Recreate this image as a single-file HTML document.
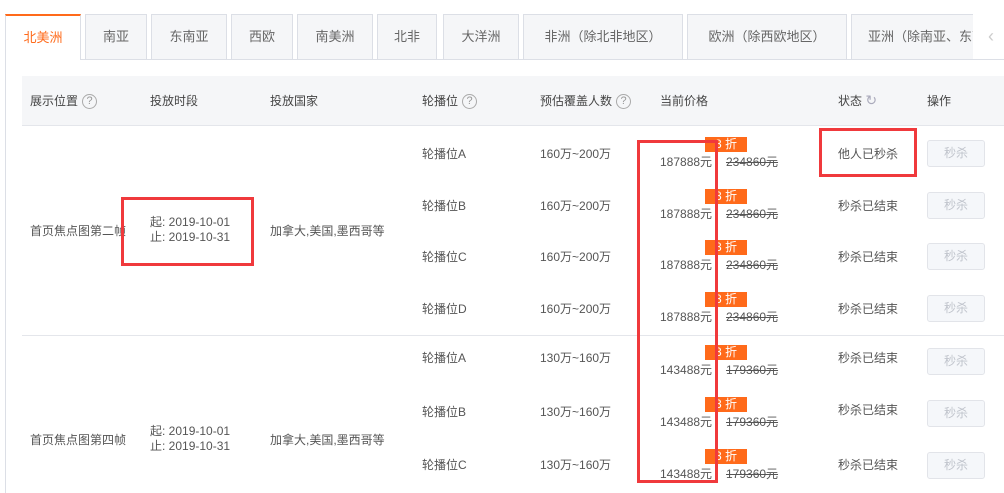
<!DOCTYPE html>
<html><head><meta charset="utf-8"><style>
*{margin:0;padding:0;box-sizing:border-box}
body{width:1004px;height:493px;overflow:hidden;background:#fff;font-family:"Liberation Sans","Noto Sans CJK SC",sans-serif;font-size:12px;color:#555;position:relative}
.a{position:absolute;white-space:nowrap}
.tab{position:absolute;top:14px;height:46px;border:1px solid #dcdfe6;background:#f5f6f8;line-height:44px;text-align:center;font-size:13px;color:#666}
.q{display:inline-block;width:15px;height:15px;border:1px solid #aaa;border-radius:50%;text-align:center;line-height:13px;font-size:11px;color:#999;vertical-align:middle;margin-left:4px}
.badge{position:absolute;width:42px;height:15px;background:#ff6a1a;color:#fff;line-height:15px;text-align:center;font-size:12px}
.btn{position:absolute;left:927px;width:58px;height:27px;border:1px solid #e2e4e9;border-radius:3px;background:#f5f7fa;color:#c0c4cc;text-align:center;line-height:25px}
.red{position:absolute;border:3px solid #f0393c}
.old{text-decoration:line-through}
</style></head><body>
<div class="tab" style="left:5px;width:76px;background:#fff;border-top:2px solid #ff6a1a;border-bottom:none;color:#ff6a1a;line-height:44px">北美洲</div>
<div class="tab" style="left:85px;width:62px">南亚</div>
<div class="tab" style="left:151px;width:76px">东南亚</div>
<div class="tab" style="left:231px;width:62px">西欧</div>
<div class="tab" style="left:297px;width:76px">南美洲</div>
<div class="tab" style="left:377px;width:60px">北非</div>
<div class="tab" style="left:443px;width:76px">大洋洲</div>
<div class="tab" style="left:523px;width:160px">非洲（除北非地区）</div>
<div class="tab" style="left:687px;width:160px">欧洲（除西欧地区）</div>
<div class="tab" style="left:851px;width:150px;text-align:left;padding-left:16px;overflow:hidden">亚洲（除南亚、东南亚）</div>
<div class="a" style="left:973px;top:14px;width:31px;height:46px;background:#fff"></div>
<div class="a" style="left:988px;top:26px;color:#ccc;font-size:18px">‹</div>
<div class="a" style="left:81px;top:59px;width:923px;height:1px;background:#dcdfe6"></div>
<div class="a" style="left:5px;top:60px;width:1px;height:433px;background:#dcdfe6"></div>

<div class="a" style="left:22px;top:76px;width:982px;height:50px;background:#f5f6f8;border-bottom:1px solid #e4e6eb"></div>
<div class="a" style="left:30px;top:92px;color:#444">展示位置<span class="q">?</span></div>
<div class="a" style="left:150px;top:92px;color:#444">投放时段</div>
<div class="a" style="left:270px;top:92px;color:#444">投放国家</div>
<div class="a" style="left:422px;top:92px;color:#444">轮播位<span class="q">?</span></div>
<div class="a" style="left:540px;top:92px;color:#444">预估覆盖人数<span class="q">?</span></div>
<div class="a" style="left:660px;top:92px;color:#444">当前价格</div>
<div class="a" style="left:838px;top:92px;color:#444">状态 <span style="color:#aab;font-size:14px">↻</span></div>
<div class="a" style="left:927px;top:92px;color:#444">操作</div>

<div class="a" style="left:22px;top:335px;width:982px;height:1px;background:#e4e6eb"></div>

<div class="a" style="left:30px;top:222px">首页焦点图第二帧</div>
<div class="a" style="left:150px;top:215px;line-height:15px">起: 2019-10-01<br>止: 2019-10-31</div>
<div class="a" style="left:270px;top:222px">加拿大,美国,墨西哥等</div>
<div class="a" style="left:30px;top:431px">首页焦点图第四帧</div>
<div class="a" style="left:150px;top:424px;line-height:15px">起: 2019-10-01<br>止: 2019-10-31</div>
<div class="a" style="left:270px;top:431px">加拿大,美国,墨西哥等</div>

<!-- rows -->
<div class="a" style="left:422px;top:145px">轮播位A</div><div class="a" style="left:540px;top:145px">160万~200万</div>
<div class="badge" style="left:705px;top:137px">8 折</div><div class="a" style="left:660px;top:153px">187888元</div><div class="a old" style="left:726px;top:153px">234860元</div>
<div class="a" style="left:838px;top:145px">他人已秒杀</div><div class="btn" style="top:140px">秒杀</div>

<div class="a" style="left:422px;top:197px">轮播位B</div><div class="a" style="left:540px;top:197px">160万~200万</div>
<div class="badge" style="left:705px;top:189px">8 折</div><div class="a" style="left:660px;top:205px">187888元</div><div class="a old" style="left:726px;top:205px">234860元</div>
<div class="a" style="left:838px;top:197px">秒杀已结束</div><div class="btn" style="top:192px">秒杀</div>

<div class="a" style="left:422px;top:248px">轮播位C</div><div class="a" style="left:540px;top:248px">160万~200万</div>
<div class="badge" style="left:705px;top:240px">8 折</div><div class="a" style="left:660px;top:256px">187888元</div><div class="a old" style="left:726px;top:256px">234860元</div>
<div class="a" style="left:838px;top:248px">秒杀已结束</div><div class="btn" style="top:243px">秒杀</div>

<div class="a" style="left:422px;top:300px">轮播位D</div><div class="a" style="left:540px;top:300px">160万~200万</div>
<div class="badge" style="left:705px;top:292px">8 折</div><div class="a" style="left:660px;top:308px">187888元</div><div class="a old" style="left:726px;top:308px">234860元</div>
<div class="a" style="left:838px;top:300px">秒杀已结束</div><div class="btn" style="top:295px">秒杀</div>

<div class="a" style="left:422px;top:349px">轮播位A</div><div class="a" style="left:540px;top:349px">130万~160万</div>
<div class="badge" style="left:705px;top:345px">8 折</div><div class="a" style="left:660px;top:361px">143488元</div><div class="a old" style="left:726px;top:361px">179360元</div>
<div class="a" style="left:838px;top:349px">秒杀已结束</div><div class="btn" style="top:348px">秒杀</div>

<div class="a" style="left:422px;top:403px">轮播位B</div><div class="a" style="left:540px;top:403px">130万~160万</div>
<div class="badge" style="left:705px;top:397px">8 折</div><div class="a" style="left:660px;top:413px">143488元</div><div class="a old" style="left:726px;top:413px">179360元</div>
<div class="a" style="left:838px;top:401px">秒杀已结束</div><div class="btn" style="top:400px">秒杀</div>

<div class="a" style="left:422px;top:456px">轮播位C</div><div class="a" style="left:540px;top:456px">130万~160万</div>
<div class="badge" style="left:705px;top:449px">8 折</div><div class="a" style="left:660px;top:465px">143488元</div><div class="a old" style="left:726px;top:465px">179360元</div>
<div class="a" style="left:838px;top:456px">秒杀已结束</div><div class="btn" style="top:452px">秒杀</div>

<div class="red" style="left:121px;top:197px;width:133px;height:69px"></div>
<div class="red" style="left:637px;top:140px;width:81px;height:343px"></div>
<div class="red" style="left:819px;top:128px;width:98px;height:49px"></div>
</body></html>
